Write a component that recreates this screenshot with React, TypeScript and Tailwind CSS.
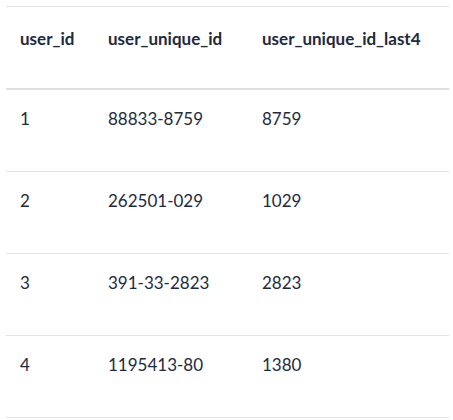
const rows = [
  ["1", "88833-8759", "8759"],
  ["2", "262501-029", "1029"],
  ["3", "391-33-2823", "2823"],
  ["4", "1195413-80", "1380"],
];

export default function App() {
  return (
    <div className="bg-white w-[453px] h-[420px] pt-[6px] pl-[6px] pr-[4px] font-[family-name:Lato,sans-serif] text-[#1e2a3d]">
      <table className="w-full border-collapse text-left text-[17px] leading-[24px]">
        <thead>
          <tr className="border-t border-[#e1e4e8] border-b-2 border-b-[#dcdfe3]">
            <th className="w-[88px] pl-[14px] pt-[20px] pb-[37px] align-top font-bold">user_id</th>
            <th className="w-[154px] pl-[14px] pt-[20px] pb-[37px] align-top font-bold">user_unique_id</th>
            <th className="pl-[14px] pt-[20px] pb-[37px] align-top font-bold">user_unique_id_last4</th>
          </tr>
        </thead>
        <tbody>
          {rows.map((r) => (
            <tr key={r[0]} className="border-b border-[#e1e4e8]">
              {r.map((c, i) => (
                <td key={i} className="pl-[14px] pt-[17px] pb-[40px] align-top">
                  {c}
                </td>
              ))}
            </tr>
          ))}
        </tbody>
      </table>
    </div>
  );
}
